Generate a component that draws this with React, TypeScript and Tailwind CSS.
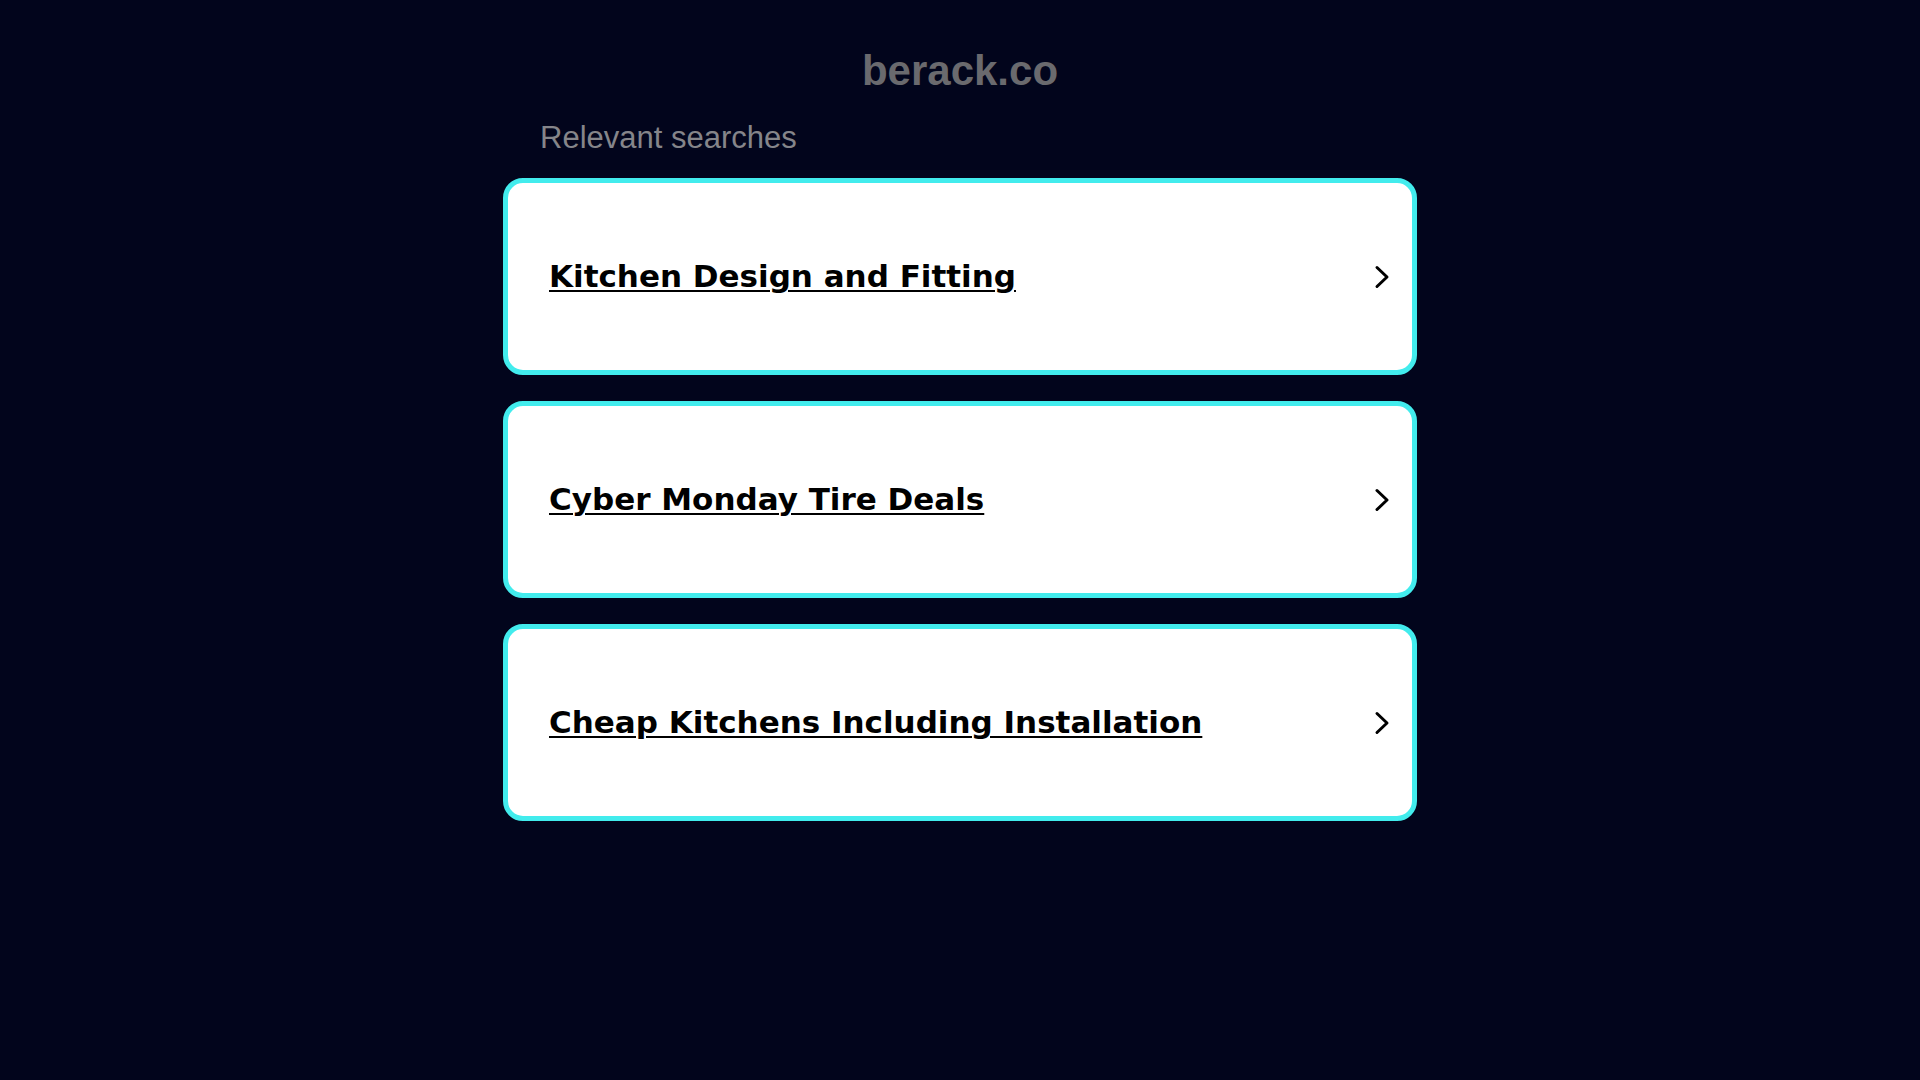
const searches = [
  "Kitchen Design and Fitting",
  "Cyber Monday Tire Deals",
  "Cheap Kitchens Including Installation",
];

function Chevron() {
  return (
    <svg
      viewBox="0 0 16 24"
      aria-hidden="true"
      className="h-[24px] w-[16px] shrink-0"
      fill="none"
      stroke="currentColor"
      strokeWidth="3"
      strokeLinecap="round"
      strokeLinejoin="round"
    >
      <path d="M3 2.5 13 12 3 21.5" />
    </svg>
  );
}

export default function App() {
  return (
    <main className="min-h-screen w-full bg-[#02051c] font-['Liberation_Sans',Arial,sans-serif]">
      <div className="mx-auto flex w-[914px] flex-col pt-[50px]">
        <h1 className="text-center text-[42px] font-bold leading-[42px] text-[#6a6a6e]">
          berack.co
        </h1>

        <p className="mt-[30px] pl-[37px] text-[31px] leading-[31px] text-[#85858a]">
          Relevant searches
        </p>

        <div className="mt-[25px] flex flex-col gap-[26px]">
          {searches.map((label) => (
            <a
              key={label}
              href="#"
              className="flex h-[197px] items-center justify-between rounded-[20px] border-[5px] border-[#42eced] bg-white pl-[41px] pr-[22px] text-black"
            >
              <span className="font-['DejaVu_Sans',Verdana,sans-serif] text-[31px] font-bold underline decoration-2 underline-offset-[3px]">
                {label}
              </span>
              <Chevron />
            </a>
          ))}
        </div>
      </div>
    </main>
  );
}
